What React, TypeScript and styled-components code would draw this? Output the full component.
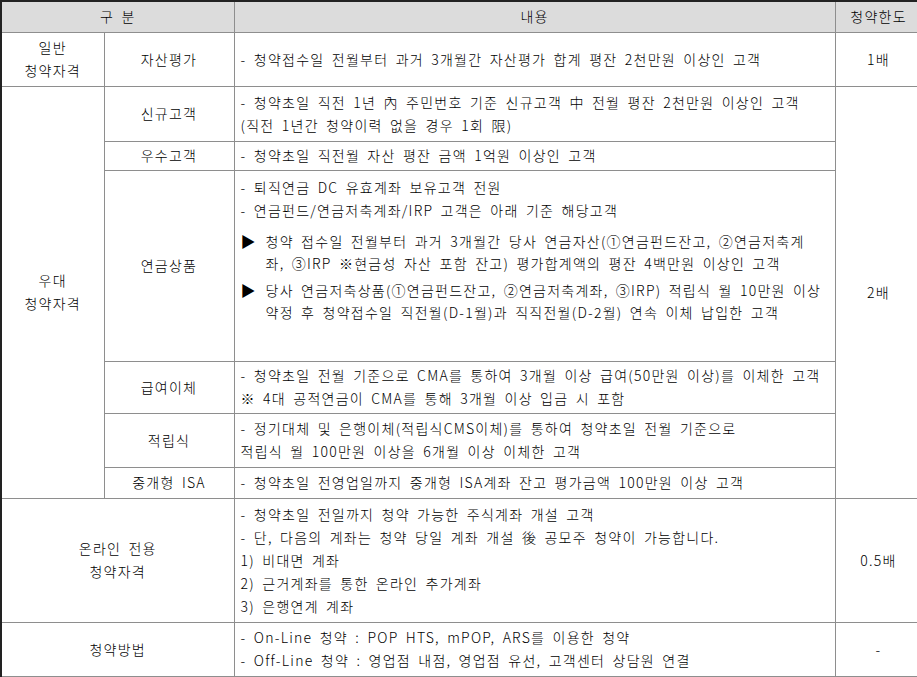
import React from 'react';
import styled, { createGlobalStyle } from 'styled-components';

const Global = createGlobalStyle`
  html, body { margin: 0; padding: 0; background: #fff; overflow: hidden; }
  body { font-family: "Noto Sans CJK KR", "Noto Sans", sans-serif; }
`;

const Table = styled.table`
  border-collapse: collapse;
  table-layout: fixed;
  width: 921px;
  border-top: 2px solid #222;
  border-left: 2px solid #222;
  font-size: 14px;
  font-weight: 300;
  color: #000;
  letter-spacing: 1.25px;
  word-spacing: 3px;
  line-height: 23px;
`;

const Row = styled.tr<{ $h: number }>`
  height: ${p => p.$h}px;
`;

const HeadCell = styled.th`
  background: #dcdcdc;
  font-weight: 300;
  text-align: center;
  border: 1px solid #8e8e8e;
  padding: 0;
`;

const Cell = styled.td<{ $left?: boolean; $top?: boolean }>`
  border: 1px solid #8e8e8e;
  text-align: ${p => (p.$left ? 'left' : 'center')};
  vertical-align: ${p => (p.$top ? 'top' : 'middle')};
  padding: ${p => (p.$top ? '5px 6px 0' : '0 6px')};
  white-space: nowrap;
`;

const Line = styled.div``;

const Bullet = styled.div<{ $gap: number }>`
  display: flex;
  margin-top: ${p => p.$gap}px;
  line-height: 22px;
`;

const Arrow = styled.span`
  flex: 0 0 25px;
  font-size: 15px;
  letter-spacing: 0;
`;

const BulletText = styled.div``;

export default function App() {
  return (
    <>
      <Global />
      <Table>
        <colgroup>
          <col style={{ width: 103 }} />
          <col style={{ width: 130 }} />
          <col style={{ width: 601 }} />
          <col style={{ width: 87 }} />
        </colgroup>
        <thead>
          <Row $h={31}>
            <HeadCell colSpan={2}>구 분</HeadCell>
            <HeadCell>내용</HeadCell>
            <HeadCell>청약한도</HeadCell>
          </Row>
        </thead>
        <tbody>
          <Row $h={54}>
            <Cell>
              <Line>일반</Line>
              <Line>청약자격</Line>
            </Cell>
            <Cell>자산평가</Cell>
            <Cell $left>- 청약접수일 전월부터 과거 3개월간 자산평가 합계 평잔 2천만원 이상인 고객</Cell>
            <Cell>1배</Cell>
          </Row>
          <Row $h={55}>
            <Cell rowSpan={6}>
              <Line>우대</Line>
              <Line>청약자격</Line>
            </Cell>
            <Cell>신규고객</Cell>
            <Cell $left>
              <Line>- 청약초일 직전 1년 內 주민번호 기준 신규고객 中 전월 평잔 2천만원 이상인 고객</Line>
              <Line>(직전 1년간 청약이력 없을 경우 1회 限)</Line>
            </Cell>
            <Cell rowSpan={6}>2배</Cell>
          </Row>
          <Row $h={29}>
            <Cell>우수고객</Cell>
            <Cell $left>- 청약초일 직전월 자산 평잔 금액 1억원 이상인 고객</Cell>
          </Row>
          <Row $h={191}>
            <Cell>연금상품</Cell>
            <Cell $left $top>
              <Line>- 퇴직연금 DC 유효계좌 보유고객 전원</Line>
              <Line>- 연금펀드/연금저축계좌/IRP 고객은 아래 기준 해당고객</Line>
              <Bullet $gap={8}>
                <Arrow>▶</Arrow>
                <BulletText>
                  <Line>청약 접수일 전월부터 과거 3개월간 당사 연금자산(①연금펀드잔고, ②연금저축계</Line>
                  <Line>좌, ③IRP ※현금성 자산 포함 잔고) 평가합계액의 평잔 4백만원 이상인 고객</Line>
                </BulletText>
              </Bullet>
              <Bullet $gap={5}>
                <Arrow>▶</Arrow>
                <BulletText>
                  <Line>당사 연금저축상품(①연금펀드잔고, ②연금저축계좌, ③IRP) 적립식 월 10만원 이상</Line>
                  <Line>약정 후 청약접수일 직전월(D-1월)과 직직전월(D-2월) 연속 이체 납입한 고객</Line>
                </BulletText>
              </Bullet>
            </Cell>
          </Row>
          <Row $h={52}>
            <Cell>급여이체</Cell>
            <Cell $left>
              <Line>- 청약초일 전월 기준으로 CMA를 통하여 3개월 이상 급여(50만원 이상)를 이체한 고객</Line>
              <Line>※ 4대 공적연금이 CMA를 통해 3개월 이상 입금 시 포함</Line>
            </Cell>
          </Row>
          <Row $h={54}>
            <Cell>적립식</Cell>
            <Cell $left>
              <Line>- 정기대체 및 은행이체(적립식CMS이체)를 통하여 청약초일 전월 기준으로</Line>
              <Line>적립식 월 100만원 이상을 6개월 이상 이체한 고객</Line>
            </Cell>
          </Row>
          <Row $h={31}>
            <Cell>중개형 ISA</Cell>
            <Cell $left>- 청약초일 전영업일까지 중개형 ISA계좌 잔고 평가금액 100만원 이상 고객</Cell>
          </Row>
          <Row $h={124}>
            <Cell colSpan={2}>
              <Line>온라인 전용</Line>
              <Line>청약자격</Line>
            </Cell>
            <Cell $left>
              <Line>- 청약초일 전일까지 청약 가능한 주식계좌 개설 고객</Line>
              <Line>- 단, 다음의 계좌는 청약 당일 계좌 개설 後 공모주 청약이 가능합니다.</Line>
              <Line>1) 비대면 계좌</Line>
              <Line>2) 근거계좌를 통한 온라인 추가계좌</Line>
              <Line>3) 은행연계 계좌</Line>
            </Cell>
            <Cell>0.5배</Cell>
          </Row>
          <Row $h={54}>
            <Cell colSpan={2}>청약방법</Cell>
            <Cell $left>
              <Line>- On-Line 청약 : POP HTS, mPOP, ARS를 이용한 청약</Line>
              <Line>- Off-Line 청약 : 영업점 내점, 영업점 유선, 고객센터 상담원 연결</Line>
            </Cell>
            <Cell>-</Cell>
          </Row>
        </tbody>
      </Table>
    </>
  );
}
